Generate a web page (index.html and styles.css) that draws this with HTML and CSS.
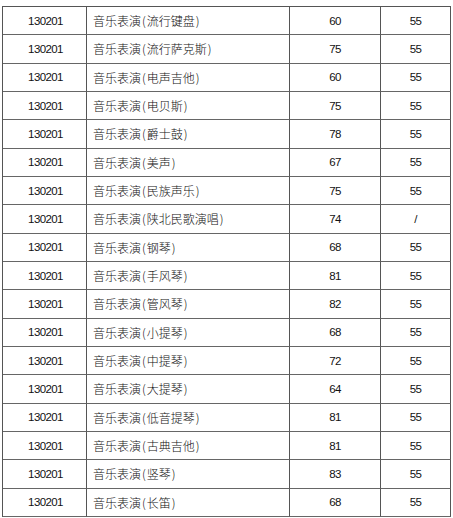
FILE: index.html
```html
<!DOCTYPE html>
<html>
<head>
<meta charset="utf-8">
<link rel="stylesheet" href="styles.css">
</head>
<body>
<div class="grid">
  <div class="c code">130201</div><div class="c name">音乐表演<span class="p">(</span>流行键盘<span class="p">)</span></div><div class="c num">60</div><div class="c num">55</div>
  <div class="c code">130201</div><div class="c name">音乐表演<span class="p">(</span>流行萨克斯<span class="p">)</span></div><div class="c num">75</div><div class="c num">55</div>
  <div class="c code">130201</div><div class="c name">音乐表演<span class="p">(</span>电声吉他<span class="p">)</span></div><div class="c num">60</div><div class="c num">55</div>
  <div class="c code">130201</div><div class="c name">音乐表演<span class="p">(</span>电贝斯<span class="p">)</span></div><div class="c num">75</div><div class="c num">55</div>
  <div class="c code">130201</div><div class="c name">音乐表演<span class="p">(</span>爵士鼓<span class="p">)</span></div><div class="c num">78</div><div class="c num">55</div>
  <div class="c code">130201</div><div class="c name">音乐表演<span class="p">(</span>美声<span class="p">)</span></div><div class="c num">67</div><div class="c num">55</div>
  <div class="c code">130201</div><div class="c name">音乐表演<span class="p">(</span>民族声乐<span class="p">)</span></div><div class="c num">75</div><div class="c num">55</div>
  <div class="c code">130201</div><div class="c name">音乐表演<span class="p">(</span>陕北民歌演唱<span class="p">)</span></div><div class="c num">74</div><div class="c num">/</div>
  <div class="c code">130201</div><div class="c name">音乐表演<span class="p">(</span>钢琴<span class="p">)</span></div><div class="c num">68</div><div class="c num">55</div>
  <div class="c code">130201</div><div class="c name">音乐表演<span class="p">(</span>手风琴<span class="p">)</span></div><div class="c num">81</div><div class="c num">55</div>
  <div class="c code">130201</div><div class="c name">音乐表演<span class="p">(</span>管风琴<span class="p">)</span></div><div class="c num">82</div><div class="c num">55</div>
  <div class="c code">130201</div><div class="c name">音乐表演<span class="p">(</span>小提琴<span class="p">)</span></div><div class="c num">68</div><div class="c num">55</div>
  <div class="c code">130201</div><div class="c name">音乐表演<span class="p">(</span>中提琴<span class="p">)</span></div><div class="c num">72</div><div class="c num">55</div>
  <div class="c code">130201</div><div class="c name">音乐表演<span class="p">(</span>大提琴<span class="p">)</span></div><div class="c num">64</div><div class="c num">55</div>
  <div class="c code">130201</div><div class="c name">音乐表演<span class="p">(</span>低音提琴<span class="p">)</span></div><div class="c num">81</div><div class="c num">55</div>
  <div class="c code">130201</div><div class="c name">音乐表演<span class="p">(</span>古典吉他<span class="p">)</span></div><div class="c num">81</div><div class="c num">55</div>
  <div class="c code">130201</div><div class="c name">音乐表演<span class="p">(</span>竖琴<span class="p">)</span></div><div class="c num">83</div><div class="c num">55</div>
  <div class="c code">130201</div><div class="c name">音乐表演<span class="p">(</span>长笛<span class="p">)</span></div><div class="c num">68</div><div class="c num">55</div>
</div>
</body>
</html>
```
FILE: styles.css
```css
html, body {
  margin: 0;
  padding: 0;
  background: #fff;
}
body {
  padding: 6px 0 0 2px;
  overflow: hidden;
  height: 518px;
  box-sizing: border-box;
}
.grid {
  display: grid;
  grid-template-columns: 84px 203px 91px 70px;
  grid-auto-rows: 28.33px;
  width: 448px;
  border-left: 1px solid #555;
  border-top: 1px solid #555;
}
.c {
  box-sizing: border-box;
  border-right: 1px solid #555;
  border-bottom: 1px solid #666;
  display: flex;
  align-items: center;
  color: #000;
  white-space: nowrap;
}
.code, .num {
  justify-content: center;
  font-family: "Liberation Sans", Arial, sans-serif;
  font-size: 11.5px;
  letter-spacing: -0.6px;
  color: #111;
}
.code {
  padding-left: 2px;
}
.name {
  padding-left: 6px;
  font-family: "Noto Sans CJK SC", "Liberation Sans", sans-serif;
  font-size: 12px;
  font-weight: 300;
  color: #111;
}
.p {
  padding: 0 1px;
}
```
